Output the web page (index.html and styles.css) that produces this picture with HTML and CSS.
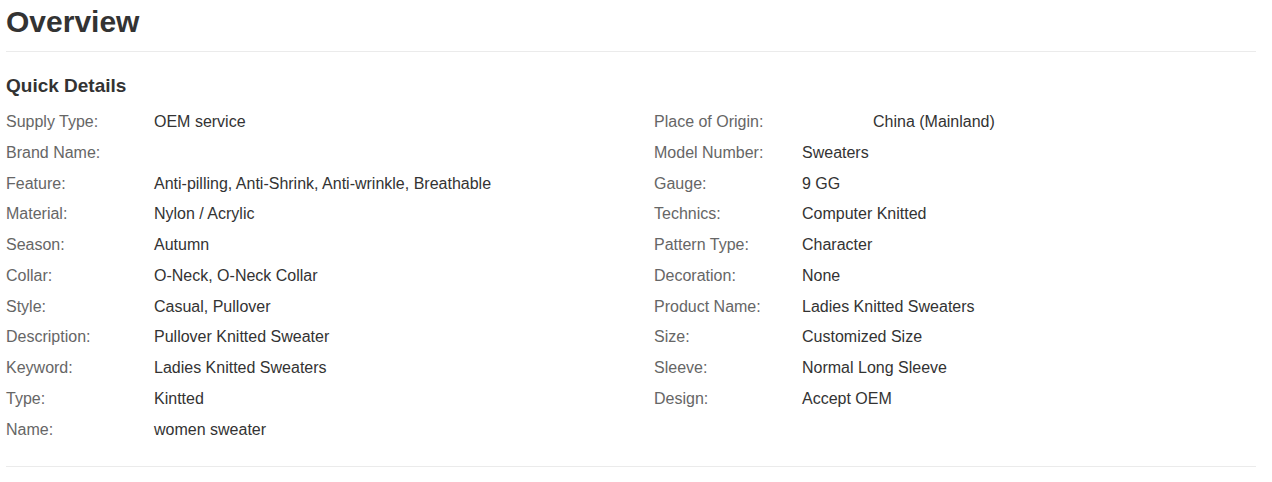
FILE: index.html
```html
<!DOCTYPE html>
<html lang="en">
<head>
<meta charset="utf-8">
<title>Overview</title>
<link rel="stylesheet" href="styles.css">
</head>
<body>
<div class="page">
  <h1 class="title">Overview</h1>
  <section class="details">
    <h2 class="subtitle">Quick Details</h2>
    <div class="grid">
      <div class="label">Supply Type:</div><div class="value">OEM service</div>
      <div class="label">Place of Origin:</div><div class="value"><span class="blank"></span>China (Mainland)</div>
      <div class="label">Brand Name:</div><div class="value"></div>
      <div class="label">Model Number:</div><div class="value">Sweaters</div>
      <div class="label">Feature:</div><div class="value">Anti-pilling, Anti-Shrink, Anti-wrinkle, Breathable</div>
      <div class="label">Gauge:</div><div class="value">9 GG</div>
      <div class="label">Material:</div><div class="value">Nylon / Acrylic</div>
      <div class="label">Technics:</div><div class="value">Computer Knitted</div>
      <div class="label">Season:</div><div class="value">Autumn</div>
      <div class="label">Pattern Type:</div><div class="value">Character</div>
      <div class="label">Collar:</div><div class="value">O-Neck, O-Neck Collar</div>
      <div class="label">Decoration:</div><div class="value">None</div>
      <div class="label">Style:</div><div class="value">Casual, Pullover</div>
      <div class="label">Product Name:</div><div class="value">Ladies Knitted Sweaters</div>
      <div class="label">Description:</div><div class="value">Pullover Knitted Sweater</div>
      <div class="label">Size:</div><div class="value">Customized Size</div>
      <div class="label">Keyword:</div><div class="value">Ladies Knitted Sweaters</div>
      <div class="label">Sleeve:</div><div class="value">Normal Long Sleeve</div>
      <div class="label">Type:</div><div class="value">Kintted</div>
      <div class="label">Design:</div><div class="value">Accept OEM</div>
      <div class="label">Name:</div><div class="value">women sweater</div>
    </div>
  </section>
</div>
</body>
</html>
```

FILE: styles.css
```css
html, body {
  margin: 0;
  padding: 0;
  background: #fff;
}
body {
  font-family: "Liberation Sans", Arial, sans-serif;
  color: #333;
}
.page {
  width: 1250px;
  padding: 4px 0 0 6px;
}
.title {
  margin: 0;
  font-size: 30px;
  font-weight: bold;
  line-height: 36px;
  color: #333;
  padding-bottom: 11px;
  border-bottom: 1px solid #ebebeb;
}
.details {
  padding-top: 22px;
  padding-bottom: 21px;
  border-bottom: 1px solid #ebebeb;
}
.subtitle {
  margin: 0 0 9px 0;
  font-size: 19px;
  line-height: 24px;
  font-weight: bold;
  color: #333;
}
.grid {
  display: grid;
  grid-template-columns: 148px 500px 148px 1fr;
  grid-auto-rows: 30.75px;
  font-size: 16px;
  line-height: 30.75px;
}
.label {
  color: #666;
  white-space: nowrap;
}
.value {
  color: #333;
  white-space: nowrap;
}
.blank {
  display: inline-block;
  width: 71px;
}
```
